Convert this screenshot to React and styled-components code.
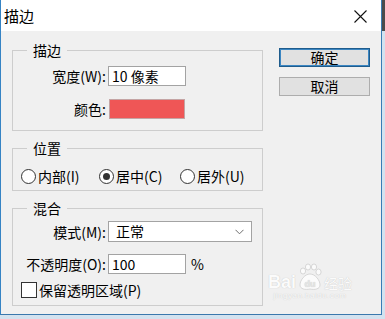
import React from 'react';
import styled, { createGlobalStyle } from 'styled-components';

const Global = createGlobalStyle`
  html, body { margin: 0; padding: 0; }
  body {
    width: 385px; height: 319px; overflow: hidden;
    background: linear-gradient(to bottom, #4b4b4b 0, #4b4b4b 31px, #d3e2ef 31px);
    font-family: "Noto Sans CJK SC", "Noto Sans", sans-serif;
    color: #000;
  }
`;

const Window = styled.div`
  position: relative;
  width: 380px;
  height: 314px;
  border-left: 1px solid #3583c4;
  border-right: 1px solid #3a7cb5;
  border-bottom: 1px solid #3a78ad;
  background: #f0f0f0;
  display: flex;
  flex-direction: column;
`;

const TitleBar = styled.div`
  height: 31px;
  flex: none;
  background: #fff;
  display: flex;
  align-items: center;
  justify-content: space-between;
  padding: 1px 14px 0 3px;
  box-sizing: border-box;
`;

const Title = styled.div`
  font-size: 15px;
  line-height: 20px;
`;

const Body = styled.div`
  display: flex;
  padding: 11px 0 0 11px;
`;

const LeftCol = styled.div`
  width: 251px;
  display: flex;
  flex-direction: column;
  gap: 9px;
`;

const Group = styled.fieldset`
  margin: 0;
  min-width: 0;
  border: 1px solid #cdcdcd;
  padding: ${p => p.$pt}px 0 ${p => p.$pb}px 0;
`;

const Legend = styled.legend`
  margin-left: 14px;
  padding: 0 6px;
  font-size: 14px;
  line-height: 17px;
`;

const FormGrid = styled.div`
  display: grid;
  grid-template-columns: 93px auto;
  column-gap: 2px;
  row-gap: ${p => p.$gap}px;
  align-items: center;
`;

const Label = styled.div`
  text-align: right;
  font-size: 14px;
  line-height: 20px;
  white-space: nowrap;
`;

const TextBox = styled.div`
  width: 78px;
  height: 20px;
  box-sizing: border-box;
  border: 1px solid #a3a3a3;
  background: #fff;
  font-size: 14px;
  line-height: 18px;
  padding-left: 3px;
  white-space: nowrap;
`;

const Swatch = styled.div`
  width: 76px;
  height: 20px;
  margin-left: 1px;
  box-sizing: border-box;
  border: 1px solid #c4a4a4;
  background: ${p => p.$color};
`;

const Select = styled.div`
  width: 144px;
  height: 21px;
  box-sizing: border-box;
  border: 1px solid #a3a3a3;
  background: #fff;
  display: flex;
  align-items: center;
  justify-content: space-between;
  padding: 0 7px 0 7px;
  font-size: 14px;
  line-height: 19px;
`;

const InlineRow = styled.div`
  display: flex;
  align-items: center;
  gap: 5px;
  font-size: 14px;
  line-height: 20px;
`;

const RadioRow = styled.div`
  display: grid;
  grid-template-columns: 78px 81px auto;
  padding-left: 8px;
  height: 16px;
  align-items: center;
`;

const RadioItem = styled.label`
  display: flex;
  align-items: center;
  gap: 2px;
  font-size: 14px;
  line-height: 16px;
  white-space: nowrap;
`;

const RadioCircle = styled.span`
  width: 15px;
  height: 15px;
  box-sizing: border-box;
  border: 1px solid #333;
  border-radius: 50%;
  background: #fff;
  display: flex;
  align-items: center;
  justify-content: center;
  flex: none;
  &::after {
    content: "";
    width: 7px;
    height: 7px;
    border-radius: 50%;
    background: ${p => (p.$checked ? '#333' : 'transparent')};
  }
`;

const CheckRow = styled.label`
  display: flex;
  align-items: center;
  gap: 2px;
  padding-left: 8px;
  font-size: 14px;
  line-height: 16px;
  grid-column: 1 / span 2;
`;

const CheckBox = styled.span`
  width: 16px;
  height: 16px;
  box-sizing: border-box;
  border: 1px solid #333;
  background: #fff;
  flex: none;
`;

const RightCol = styled.div`
  width: 91px;
  margin: 6px 0 0 16px;
  display: flex;
  flex-direction: column;
  gap: 10px;
`;

const Button = styled.div`
  height: 19px;
  box-sizing: border-box;
  background: #e1e1e1;
  border: 1px solid ${p => (p.$primary ? '#1f5c8c' : '#adadad')};
  box-shadow: ${p => (p.$primary ? 'inset 0 0 0 1px #3b86c2' : 'none')};
  display: flex;
  align-items: center;
  justify-content: center;
  font-size: 14px;
  line-height: 17px;
`;

const Watermark = styled.div`
  position: absolute;
  left: 267px;
  top: 263px;
  display: flex;
  flex-direction: column;
  align-items: center;
  color: #fbfbfb;
  text-shadow: 0 0 1px #bdbdbd;
  pointer-events: none;
`;

const MarkTop = styled.div`
  display: flex;
  align-items: flex-end;
  gap: 1px;
`;

const MarkBai = styled.span`
  font-family: "Liberation Sans", sans-serif;
  font-weight: bold;
  font-size: 18px;
  line-height: 18px;
`;

const MarkJy = styled.span`
  font-size: 14px;
  line-height: 16px;
`;

const MarkUrl = styled.div`
  font-family: "Liberation Sans", sans-serif;
  font-size: 8px;
  line-height: 9px;
  letter-spacing: 0.5px;
`;

const Chevron = () => (
  <svg width="9" height="6" viewBox="0 0 9 6">
    <path d="M0.5 0.8 L4.5 4.8 L8.5 0.8" fill="none" stroke="#6d6d6d" strokeWidth="1" />
  </svg>
);

const CloseIcon = () => (
  <svg width="13" height="13" viewBox="0 0 13 13">
    <path d="M0.5 0.5 L12.5 12.5 M12.5 0.5 L0.5 12.5" stroke="#111" strokeWidth="1.1" fill="none" />
  </svg>
);

const Paw = () => (
  <svg width="26" height="28" viewBox="0 0 26 28">
    <g fill="#fbfbfb" stroke="#c9c9c9" strokeWidth="0.7">
      <ellipse cx="6" cy="8" rx="2.6" ry="3" />
      <ellipse cx="11" cy="4" rx="2.6" ry="3" />
      <ellipse cx="17" cy="4" rx="2.6" ry="3" />
      <ellipse cx="21.5" cy="9" rx="2.6" ry="3" />
      <path d="M13 11 C8 11 3 17 3 22 C3 26 8 27 13 26 C18 27 23 26 23 22 C23 17 18 11 13 11 Z" />
    </g>
    <text x="13" y="24" textAnchor="middle" fontSize="9" fontFamily="Liberation Sans, sans-serif" fontWeight="bold" fill="#e6e6e6">du</text>
  </svg>
);

export default function App() {
  return (
    <>
      <Global />
      <Window>
        <TitleBar>
          <Title>描边</Title>
          <CloseIcon />
        </TitleBar>
        <Body>
          <LeftCol>
            <Group $pt={7} $pb={11}>
              <Legend>描边</Legend>
              <FormGrid $gap={13}>
                <Label>宽度(W):</Label>
                <TextBox>10 像素</TextBox>
                <Label>颜色:</Label>
                <Swatch $color="#ef5656" />
              </FormGrid>
            </Group>
            <Group $pt={11} $pb={6}>
              <Legend>位置</Legend>
              <RadioRow>
                <RadioItem><RadioCircle />内部(I)</RadioItem>
                <RadioItem><RadioCircle $checked />居中(C)</RadioItem>
                <RadioItem><RadioCircle />居外(U)</RadioItem>
              </RadioRow>
            </Group>
            <Group $pt={4} $pb={7}>
              <Legend>混合</Legend>
              <FormGrid $gap={12}>
                <Label>模式(M):</Label>
                <Select>
                  <span>正常</span>
                  <Chevron />
                </Select>
                <Label>不透明度(O):</Label>
                <InlineRow>
                  <TextBox>100</TextBox>
                  <span>%</span>
                </InlineRow>
              </FormGrid>
              <FormGrid $gap={0} style={{ marginTop: 8 }}>
                <CheckRow>
                  <CheckBox />
                  保留透明区域(P)
                </CheckRow>
              </FormGrid>
            </Group>
          </LeftCol>
          <RightCol>
            <Button $primary>确定</Button>
            <Button>取消</Button>
          </RightCol>
        </Body>
        <Watermark>
          <MarkTop>
            <MarkBai>Bai</MarkBai>
            <Paw />
            <MarkJy>经验</MarkJy>
          </MarkTop>
          <MarkUrl>jingyan.baidu.com</MarkUrl>
        </Watermark>
      </Window>
    </>
  );
}
